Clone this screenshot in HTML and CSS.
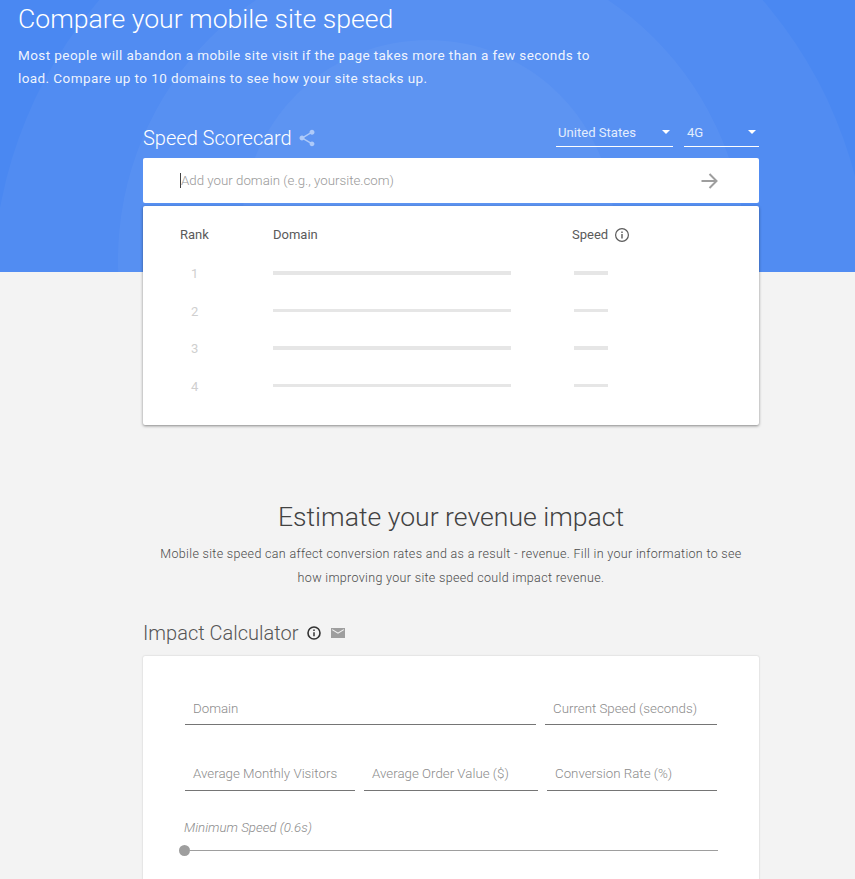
FILE: index.html
```html
<!DOCTYPE html>
<html lang="en">
<head>
    <meta charset="UTF-8">
    <title>Compare your mobile site speed</title>
    <link rel="stylesheet" href="styles.css">
</head>
<body>
    <header class="hero">
        <div class="hero-arcs">
            <div class="arc arc-outer"></div>
            <div class="arc arc-middle"></div>
            <div class="arc arc-inner"></div>
        </div>
        <div class="hero-copy">
            <h1 class="hero-title">Compare your mobile site speed</h1>
            <p class="hero-text">Most people will abandon a mobile site visit if the page takes more than a few seconds to load. Compare up to 10 domains to see how your site stacks up.</p>
        </div>
    </header>

    <main class="content">
        <section class="scorecard">
            <div class="scorecard-head">
                <h2 class="scorecard-title">Speed Scorecard</h2>
                <svg class="share-icon" width="20" height="20" viewBox="0 0 24 24" fill="currentColor">
                    <path d="M18 16.08c-.76 0-1.44.3-1.96.77L8.91 12.7c.05-.23.09-.46.09-.7s-.04-.47-.09-.7l7.05-4.11c.54.5 1.25.81 2.04.81 1.66 0 3-1.34 3-3s-1.34-3-3-3-3 1.34-3 3c0 .24.04.47.09.7L8.04 9.81C7.5 9.31 6.79 9 6 9c-1.66 0-3 1.34-3 3s1.34 3 3 3c.79 0 1.5-.31 2.04-.81l7.12 4.16c-.05.21-.08.43-.08.65 0 1.61 1.31 2.92 2.92 2.92 1.61 0 2.92-1.31 2.92-2.92s-1.31-2.92-2.92-2.92z"></path>
                </svg>
                <div class="picker picker-country">
                    <span>United States</span>
                    <i class="caret"></i>
                </div>
                <div class="picker picker-network">
                    <span>4G</span>
                    <i class="caret"></i>
                </div>
            </div>

            <div class="domain-box">
                <span class="text-cursor"></span>
                <span class="domain-hint">Add your domain (e.g., yoursite.com)</span>
                <svg class="go-icon" width="24" height="24" viewBox="0 0 24 24" fill="none" stroke="currentColor" stroke-width="2">
                    <path d="M4.5 12h14.5M12.5 5l7 7-7 7"></path>
                </svg>
            </div>

            <div class="rank-card">
                <div class="rank-row rank-head">
                    <div class="col-rank">Rank</div>
                    <div class="col-domain">Domain</div>
                    <div class="col-speed">
                        Speed
                        <svg class="info-icon" width="16" height="16" viewBox="0 0 16 16" fill="none" stroke="currentColor">
                            <circle cx="8" cy="8" r="6.4" stroke-width="1.2"></circle>
                            <path d="M8 7v4.4M8 4.4v1.5" stroke-width="1.4"></path>
                        </svg>
                    </div>
                </div>
                <div class="rank-row">
                    <div class="col-rank rank-num">1</div>
                    <div class="col-domain"><div class="bar bar-long"></div></div>
                    <div class="col-speed"><div class="bar bar-short"></div></div>
                </div>
                <div class="rank-row">
                    <div class="col-rank rank-num">2</div>
                    <div class="col-domain"><div class="bar bar-long bar-thin"></div></div>
                    <div class="col-speed"><div class="bar bar-short bar-thin"></div></div>
                </div>
                <div class="rank-row">
                    <div class="col-rank rank-num">3</div>
                    <div class="col-domain"><div class="bar bar-long"></div></div>
                    <div class="col-speed"><div class="bar bar-short"></div></div>
                </div>
                <div class="rank-row">
                    <div class="col-rank rank-num">4</div>
                    <div class="col-domain"><div class="bar bar-long bar-thin"></div></div>
                    <div class="col-speed"><div class="bar bar-short bar-thin"></div></div>
                </div>
            </div>
        </section>

        <section class="estimate">
            <h2 class="estimate-title">Estimate your revenue impact</h2>
            <p class="estimate-text">Mobile site speed can affect conversion rates and as a result - revenue. Fill in your information to see how improving your site speed could impact revenue.</p>
        </section>

        <section class="calculator">
            <div class="calc-head">
                <h2 class="calc-title">Impact Calculator</h2>
                <svg class="calc-info" width="16" height="16" viewBox="0 0 16 16" fill="none" stroke="currentColor">
                    <circle cx="8" cy="8" r="6" stroke-width="1.6"></circle>
                    <path d="M8 7.2v4M8 4.5v1.4" stroke-width="1.5"></path>
                </svg>
                <svg class="mail-icon" width="14" height="10" viewBox="0 0 14 10">
                    <path fill="#9e9e9e" d="M0 0h14v10H0z"></path>
                    <path fill="none" stroke="#f3f3f3" stroke-width="1.1" d="M1.2 1.6L7 5.2l5.8-3.6"></path>
                </svg>
            </div>
            <div class="calc-card">
                <div class="field-row row-first">
                    <div class="field field-domain">Domain</div>
                    <div class="field field-current">Current Speed (seconds)</div>
                </div>
                <div class="field-row row-second">
                    <div class="field field-visitors">Average Monthly Visitors</div>
                    <div class="field field-order">Average Order Value ($)</div>
                    <div class="field field-rate">Conversion Rate (%)</div>
                </div>
                <div class="slider-label">Minimum Speed (0.6s)</div>
                <div class="slider">
                    <span class="slider-knob"></span>
                    <span class="slider-track"></span>
                </div>
            </div>
        </section>
    </main>
</body>
</html>
```

FILE: styles.css
```css
* {
    box-sizing: border-box;
}

html, body {
    height: 879px;
    overflow: hidden;
}

body {
    margin: 0;
    background: #f3f3f3;
    font-family: Roboto, 'Liberation Sans', sans-serif;
    color: #424242;
}

h1, h2, p {
    margin: 0;
    font-weight: 300;
}

/* hero */
.hero {
    position: relative;
    height: 272px;
    padding: 1px 18px 0;
    background: #4a88f2;
    color: white;
}

.hero-arcs {
    position: absolute;
    top: 0;
    left: 0;
    width: 100%;
    height: 100%;
    overflow: hidden;
}

.arc {
    position: absolute;
    border-radius: 50%;
    background: rgba(255, 255, 255, 0.04);
}

.arc-outer {
    left: -7px;
    top: -152px;
    width: 876px;
    height: 876px;
}

.arc-middle {
    left: 118px;
    top: -54px;
    width: 628px;
    height: 628px;
}

.arc-inner {
    left: 242px;
    top: 40px;
    width: 372px;
    height: 372px;
}

.hero-copy {
    position: relative;
    width: 600px;
}

.hero-title {
    font-size: 26.6px;
    line-height: 36px;
}

.hero-text {
    margin-top: 7px;
    font-size: 13.5px;
    line-height: 23px;
    letter-spacing: 0.42px;
    font-weight: 400;
    color: rgba(255, 255, 255, 0.92);
}

/* scorecard */
.content {
    position: relative;
    width: 616px;
    margin: -150px 0 0 143px;
}

.scorecard-head {
    display: flex;
    align-items: flex-start;
    height: 36px;
    color: white;
}

.scorecard-title {
    font-size: 20px;
    line-height: 32px;
}

.share-icon {
    margin: 6px 0 0 5px;
    color: rgba(255, 255, 255, 0.5);
}

.picker {
    display: flex;
    justify-content: space-between;
    align-items: center;
    height: 25px;
    padding-bottom: 4px;
    border-bottom: 1px solid white;
    font-size: 13.1px;
    color: #e3edfd;
}

.picker-country {
    width: 117px;
    margin-left: auto;
    padding-left: 2px;
    padding-right: 3px;
}

.picker-network {
    width: 75px;
    margin-left: 11px;
    padding-left: 3px;
    padding-right: 3px;
}

.caret {
    width: 0;
    height: 0;
    border-left: 4.5px solid transparent;
    border-right: 4.5px solid transparent;
    border-top: 4.5px solid white;
}

.domain-box {
    display: flex;
    align-items: center;
    height: 45px;
    padding: 0 38px 0 37px;
    background: white;
    border-radius: 2px;
}

.text-cursor {
    width: 1px;
    height: 15px;
    background: #424242;
}

.domain-hint {
    font-size: 13.3px;
    font-weight: 300;
    color: #999;
}

.go-icon {
    margin-left: auto;
    color: #9e9e9e;
}

.rank-card {
    height: 219px;
    margin-top: 3px;
    padding-top: 20px;
    background: white;
    border-radius: 2px;
    box-shadow: 0 1px 3px rgba(0, 0, 0, 0.45);
}

.rank-row {
    display: flex;
    align-items: center;
    height: 37.5px;
    font-size: 13px;
}

.rank-head {
    height: 17px;
    margin-bottom: 12px;
    color: #5a5a5a;
}

.col-rank {
    width: 130px;
    padding-left: 37px;
}

.rank-num {
    padding-left: 48px;
    color: #cfcfcf;
}

.col-domain {
    width: 299px;
}

.col-speed {
    display: flex;
    align-items: center;
    gap: 6px;
}

.info-icon {
    color: #5a5a5a;
}

.bar {
    height: 4px;
    margin-top: -2px;
    background: #e6e6e6;
}

.bar-thin {
    height: 3px;
}

.bar-long {
    width: 238px;
}

.bar-short {
    width: 34px;
    margin-left: 2px;
}

/* estimate */
.estimate {
    margin-top: 74px;
    text-align: center;
}

.estimate-title {
    font-size: 26.6px;
    line-height: 36px;
    color: #424242;
}

.estimate-text {
    width: 600px;
    margin: 7px auto 0;
    font-size: 12.5px;
    font-weight: 300;
    line-height: 24px;
    letter-spacing: 0.33px;
    color: #4a4a4a;
}

/* calculator */
.calculator {
    margin-top: 27px;
}

.calc-head {
    display: flex;
    align-items: center;
    height: 32px;
}

.calc-title {
    font-size: 20px;
    color: #555;
}

.calc-info {
    margin-left: 8px;
    color: #333;
}

.mail-icon {
    margin-left: 9px;
}

.calc-card {
    height: 240px;
    margin-top: 7px;
    padding: 1px 41px 0 42px;
    background: white;
    border-radius: 2px;
    box-shadow: 0 0 2px rgba(0, 0, 0, 0.2);
}

.field-row {
    display: flex;
}

.row-first {
    gap: 9px;
    margin-top: 35px;
}

.row-second {
    gap: 9px;
    margin-top: 33px;
}

.field {
    height: 33px;
    padding: 9px 8px 0;
    border-bottom: 1px solid #757575;
    font-size: 13.3px;
    font-weight: 300;
    color: #8c8c8c;
}

.row-second .field {
    padding-top: 8px;
}

.field-domain {
    width: 351px;
}

.field-current {
    width: 172px;
}

.field-visitors {
    width: 170px;
}

.field-order {
    width: 174px;
}

.field-rate {
    width: 170px;
}

.slider-label {
    margin: 29px 0 0 -1px;
    font-size: 13.3px;
    font-weight: 300;
    font-style: italic;
    color: #8c8c8c;
}

.slider {
    display: flex;
    align-items: center;
    margin: 10px 0 0 -6px;
}

.slider-knob {
    width: 11px;
    height: 11px;
    border-radius: 50%;
    background: #9e9e9e;
}

.slider-track {
    flex: 1;
    height: 1px;
    background: #9e9e9e;
}
```
